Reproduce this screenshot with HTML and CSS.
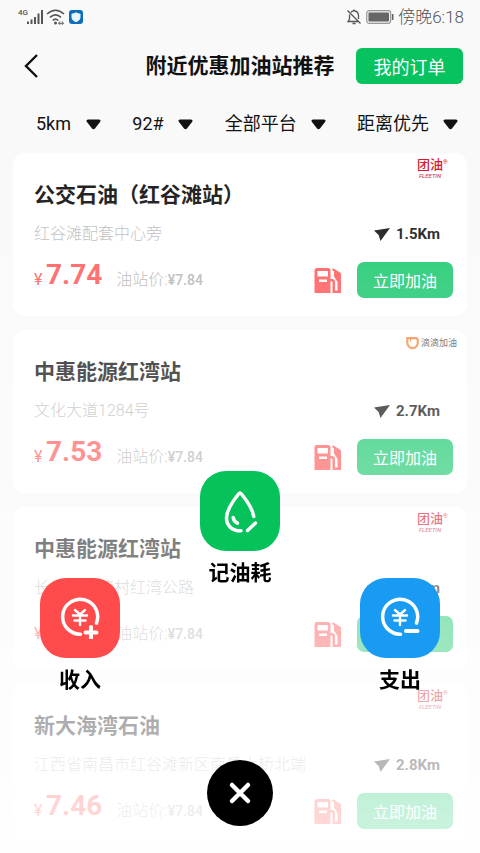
FILE: index.html
```html
<!DOCTYPE html>
<html lang="zh-CN">
<head>
<meta charset="utf-8">
<meta name="viewport" content="width=device-width, initial-scale=1">
<title>附近优惠加油站推荐</title>
<link rel="stylesheet" href="styles.css">
</head>
<body>
<svg class="defs" aria-hidden="true">
  <symbol id="caret" viewBox="0 0 15 11"><path d="M2 .5h11q2.500 .5 1 2.500L9 9.500q-1.500 1.500-3 0L1 3Q-.5 1 2 .5z" fill="currentColor"/></symbol>
  <symbol id="nav" viewBox="0 0 16 13"><path d="M0 2.500 16 0 6.500 13 4.600 7z" fill="currentColor"/></symbol>
  <symbol id="pump" viewBox="0 0 27 27">
    <path fill="currentColor" fill-rule="evenodd" d="M3 1h11a2.500 2.500 0 0 1 2.500 2.500V12H18a3 3 0 0 1 3 3v8.500h2.500V15L20 9.500V4.500L18 3l1-1.800 7 4.300a2 2 0 0 1 1 1.800V26h-8.500V14.500h-2V26H.5V3.500A2.500 2.500 0 0 1 3 1zm.5 3v5.500H14V4zM5 12.500v2.500h8v-2.500z"/>
  </symbol>
  <symbol id="coin" viewBox="0 0 40 40">
    <g fill="none" stroke="currentColor" stroke-linecap="round" stroke-linejoin="round">
      <path stroke-width="3.500" d="M20.500 37.200A17.500 17.500 0 1 1 36.500 26"/>
      <path stroke-width="2.400" d="M15 13l5 4.500 5-4.500M13 18.500h14M14.500 23.500h11M20 18v10"/>
    </g>
  </symbol>
</svg>

<div class="status">
  <svg class="status-left" width="66" height="18" viewBox="0 0 66 18" aria-hidden="true">
    <text class="net" x="0" y="7">4G</text>
    <path stroke="#555" stroke-width="2" d="M10 16v-2.500M13.500 16v-4.500M17 16V9M20.500 16V5.500M24 16V2"/>
    <g fill="none" stroke="#555" stroke-width="1.600"><path d="M29 6q8.500-7.500 17 0M32 9.300q5.500-5 11 0M34.700 12.500q2.800-2.600 5.600 0"/></g>
    <circle cx="37.500" cy="15" r="1.500" fill="#555"/><path d="M41 15.300h4M42 13.500l-1.500 1.800 1.500 1.500M44 13.500l1.500 1.800-1.500 1.500" stroke="#555" fill="none"/>
    <rect x="51" y="2" width="14" height="14" rx="3" fill="#0d6cbb"/>
    <path d="M58 4.300q2.200 1.400 4.500 1.400v3.600q0 3.200-4.500 5-4.500-1.800-4.500-5V5.700q2.300 0 4.500-1.400z" fill="#e9f5ff"/>
  </svg>
  <div class="status-right">
    <svg width="16" height="16" viewBox="0 0 16 16" fill="none" stroke="#555" stroke-width="1.300" aria-hidden="true"><path d="M5 3.200q1-1 2.200-1.200.8-1.500 1.600 0 3.700.7 3.700 4.500V10M3.500 5.500V10L2 12.500h10M6.500 14.500h3M1.500 1.500l13 13"/></svg>
    <svg width="28" height="14" viewBox="0 0 28 14" aria-hidden="true"><rect x=".7" y=".7" width="24" height="12.600" rx="2.500" fill="#eee" stroke="#999" stroke-width="1.200"/><rect x="2.500" y="2.500" width="20.500" height="9" rx="1" fill="#666"/><path d="M26.700 4v6" stroke="#666" stroke-width="1.600"/></svg>
    <span>傍晚6:18</span>
  </div>
</div>

<header class="header">
  <button class="back" type="button" aria-label="返回"><svg width="14" height="24" viewBox="0 0 14 24" fill="none" stroke="#111" stroke-width="2.400"><path d="M13 1 2 12l11 11"/></svg></button>
  <h1>附近优惠加油站推荐</h1>
  <button class="orders" type="button">我的订单</button>
</header>

<form class="filters">
  <label class="filter"><select aria-label="距离"><option>5km</option></select><svg><use href="#caret"/></svg></label>
  <label class="filter"><select aria-label="油号"><option>92#</option></select><svg><use href="#caret"/></svg></label>
  <label class="filter"><select aria-label="平台"><option>全部平台</option></select><svg><use href="#caret"/></svg></label>
  <label class="filter"><select aria-label="排序"><option>距离优先</option></select><svg><use href="#caret"/></svg></label>
</form>

<main class="list">
  <article class="card">
    <div class="brand fleetin"><span class="brand-name">团油</span><span class="brand-sub">FLEETIN</span><span class="reg">®</span></div>
    <h2>公交石油（红谷滩站）</h2>
    <div class="place"><span class="address">红谷滩配套中心旁</span><span class="distance"><svg><use href="#nav"/></svg>1.5Km</span></div>
    <div class="deal"><span class="yen">¥</span><strong>7.74</strong><span class="list-price">油站价:<b>¥7.84</b></span><svg class="pump"><use href="#pump"/></svg><button type="button">立即加油</button></div>
  </article>
  <article class="card">
    <div class="brand didi"><svg width="13" height="13" viewBox="0 0 13 13" fill="none" stroke="#f58a42" stroke-width="2.200"><path d="M3 1.200h6.500q2.300 0 2.300 2.300v2.300a5.200 5.200 0 0 1-10.500 0V1.200h2"/><path stroke-width="1.300" d="M4.500 2v2.500"/></svg><span>滴滴加油</span></div>
    <h2>中惠能源红湾站</h2>
    <div class="place"><span class="address">文化大道1284号</span><span class="distance"><svg><use href="#nav"/></svg>2.7Km</span></div>
    <div class="deal"><span class="yen">¥</span><strong>7.53</strong><span class="list-price">油站价:<b>¥7.84</b></span><svg class="pump"><use href="#pump"/></svg><button type="button">立即加油</button></div>
  </article>
  <article class="card">
    <div class="brand fleetin"><span class="brand-name">团油</span><span class="brand-sub">FLEETIN</span><span class="reg">®</span></div>
    <h2>中惠能源红湾站</h2>
    <div class="place"><span class="address">长堎镇红湾村红湾公路</span><span class="distance"><svg><use href="#nav"/></svg>2.7Km</span></div>
    <div class="deal"><span class="yen">¥</span><strong>7.53</strong><span class="list-price">油站价:<b>¥7.84</b></span><svg class="pump"><use href="#pump"/></svg><button type="button">立即加油</button></div>
  </article>
  <article class="card">
    <div class="brand fleetin"><span class="brand-name">团油</span><span class="brand-sub">FLEETIN</span><span class="reg">®</span></div>
    <h2>新大海湾石油</h2>
    <div class="place"><span class="address">江西省南昌市红谷滩新区南昌大桥北端</span><span class="distance"><svg><use href="#nav"/></svg>2.8Km</span></div>
    <div class="deal"><span class="yen">¥</span><strong>7.46</strong><span class="list-price">油站价:<b>¥7.84</b></span><svg class="pump"><use href="#pump"/></svg><button type="button">立即加油</button></div>
  </article>
</main>

<div class="veil"></div>
<nav class="menu">
  <div class="actions">
    <button class="action" type="button"><span class="tile red"><svg width="40" height="42" viewBox="0 0 40 42"><use href="#coin" width="40" height="40"/><path class="cut" d="M31 28v16M23 35.500h16"/><path d="M31 30v11M25.500 35.500h11" stroke="#fff" stroke-width="4" stroke-linecap="round"/></svg></span>收入</button>
    <button class="action raised" type="button"><span class="tile green"><svg width="40" height="44" viewBox="0 0 40 44" fill="none" stroke="#fff" stroke-width="3.500" stroke-linecap="round" stroke-linejoin="round"><path d="M21 41.800C11 42 6.500 35.500 6.500 29 6.500 21 12.500 12.500 18.500 5q1.500-1.800 3 0C28 13 32.500 20 33.800 27.500"/><path d="M13.200 28.500q.5 4 4.300 5.700M27.500 41.500l8-7.500"/></svg></span>记油耗</button>
    <button class="action" type="button"><span class="tile blue"><svg width="40" height="42" viewBox="0 0 40 42"><use href="#coin" width="40" height="40"/><path d="M26 34h11.500" stroke="#fff" stroke-width="4" stroke-linecap="round"/></svg></span>支出</button>
  </div>
  <button class="close" type="button" aria-label="关闭"><svg width="24" height="24" viewBox="0 0 24 24" stroke="#fff" stroke-width="4.500" stroke-linecap="round"><path d="M4 4l16 16M20 4 4 20"/></svg></button>
</nav>
</body>
</html>
```
FILE: styles.css
```css
* { box-sizing: border-box; }

body {
  margin: 0;
  background: #f9f9f9;
  color: #111;
  font-family: Roboto, "Noto Sans CJK SC", sans-serif;
  font-size: 16px;
}

button, select {
  border: 0;
  padding: 0;
  margin: 0;
  background: none;
  color: inherit;
  font: inherit;
}

svg { display: block; flex: none; }
.defs { position: absolute; width: 0; height: 0; }

.status {
  display: flex;
  justify-content: space-between;
  align-items: center;
  height: 33px;
  padding: 0 16px 0 18px;
  color: #555;
}
.net { font: 500 8px Roboto, sans-serif; fill: #555; }
.status-right { display: flex; align-items: center; gap: 4px; font-size: 17px; line-height: 20px; font-weight: 300; }

.header {
  display: grid;
  grid-template-columns: 1fr auto 1fr;
  align-items: center;
  height: 66px;
  padding: 0 17px 0 24px;
}
.back { justify-self: start; }
h1 { margin: 0 7px 0 0; font-size: 21px; line-height: 32px; font-weight: 700; }
.orders {
  justify-self: end;
  width: 107px;
  height: 36px;
  border-radius: 6px;
  background: #07c35f;
  color: #fff;
  font-size: 18px;
}

.filters {
  display: flex;
  justify-content: space-between;
  align-items: center;
  height: 50px;
  padding: 0 22px 0 36px;
}
.filter { display: flex; align-items: center; gap: 14px; }
.filter select { appearance: none; font-size: 18px; line-height: 26px; }
.filter svg { width: 15px; height: 11px; }

.list {
  display: flex;
  flex-direction: column;
  gap: 14px;
  padding: 4px 13px 6px;
}
.card {
  position: relative;
  padding: 26px 14px 18px 21px;
  border-radius: 12px;
  background: #fff;
}
h2 { margin: 0 0 11px; font-size: 21px; line-height: 32px; font-weight: 700; }

.place {
  display: flex;
  justify-content: space-between;
  margin-bottom: 16px;
  line-height: 24px;
}
.address { color: #bbb; font-weight: 300; }
.distance {
  display: flex;
  align-items: center;
  gap: 6px;
  padding-right: 13px;
  font-size: 15px;
  font-weight: 700;
}
.distance svg { width: 16px; height: 13px; }

.deal { display: flex; align-items: center; height: 36px; color: #ff5656; }
.yen { width: 12px; font-size: 16px; line-height: 24px; }
.deal strong {
  font-weight: 700;
  font-size: 28px;
  line-height: 36px;
  margin-bottom: 10px;
}
.list-price { margin-left: 14px; color: #b4b4b4; font-weight: 300; line-height: 24px; }
.list-price b { font-size: 14px; font-weight: 500; }
.pump { width: 27px; height: 27px; margin: 0 16px 0 auto; }
.deal button {
  width: 96px;
  height: 36px;
  border-radius: 7px;
  background: #15c76a;
  color: #fff;
}

.brand { position: absolute; top: 5px; }
.fleetin {
  right: 24px;
  display: flex;
  flex-direction: column;
  align-items: center;
  color: #d0122c;
}
.brand-name { font-size: 13px; line-height: 14px; font-weight: 500; }
.brand-sub { font-size: 6px; line-height: 7px; font-style: italic; font-weight: 400; }
.reg { position: absolute; top: 0; left: 100%; font-size: 6px; line-height: 8px; }
.didi { right: 10px; display: flex; align-items: center; gap: 2px; color: #555; font-size: 9px; line-height: 16px; }

.veil {
  position: fixed;
  inset: 0;
  background: linear-gradient(rgba(255, 255, 255, 0) 14%, rgba(255, 255, 255, .8) 100%);
  pointer-events: none;
}

.menu {
  position: fixed;
  left: 0;
  right: 0;
  bottom: 0;
  display: flex;
  flex-direction: column;
  align-items: center;
  gap: 64px;
  padding-bottom: 27px;
}
.actions {
  display: grid;
  grid-template-columns: repeat(3, 1fr);
  align-items: end;
  justify-items: center;
  width: 100%;
}
.action {
  display: flex;
  flex-direction: column;
  align-items: center;
  gap: 6px;
  color: #000;
  font-size: 21px;
  line-height: 32px;
  font-weight: 700;
}
.raised { padding-bottom: 107px; }
.tile {
  display: grid;
  place-items: center;
  width: 80px;
  height: 80px;
  border-radius: 26px;
  color: #fff;
}
.red { background: #ff4b4b; }
.green { background: #05c25b; }
.blue { background: #1a9bf3; }
.cut { stroke: #ff4b4b; stroke-width: 8px; }
.close {
  display: grid;
  place-items: center;
  width: 66px;
  height: 66px;
  border-radius: 50%;
  background: #000;
}
```
